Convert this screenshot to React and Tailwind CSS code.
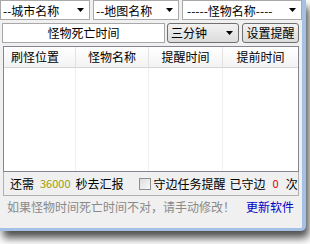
import React from 'react';

const Arrow = () => (
  <svg width="8" height="5" viewBox="0 0 8 5" className="shrink-0">
    <path d="M0 0 H7 L3.5 4 Z" fill="#000" />
  </svg>
);

const Combo = ({ text, className }) => (
  <div className={`h-[20px] bg-white border border-[#a8a8a8] flex items-center pl-[2px] pr-[4px] ${className}`}>
    <span className="flex-1 whitespace-nowrap overflow-hidden leading-[17px]">{text}</span>
    <Arrow />
  </div>
);

const columns = [
  { label: '刷怪位置', w: 'w-[72px]', align: 'justify-start pl-[7px]' },
  { label: '怪物名称', w: 'w-[73px]', align: 'justify-center' },
  { label: '提醒时间', w: 'w-[74px]', align: 'justify-center' },
  { label: '提前时间', w: 'flex-1', align: 'justify-center' },
];

export default function App() {
  return (
    <div
      className="relative w-[310px] h-[244px] overflow-hidden bg-white text-[12px] text-black"
      style={{ fontFamily: '"Noto Sans CJK SC", "Liberation Sans", sans-serif' }}
    >
      <div className="w-[306px] h-[231px] bg-[#f0f0f0] border-r-[4px] border-b-[3px] border-[#a4c0e4] rounded-br-[5px] shadow-[3px_7px_9px_rgba(0,0,0,0.7)] flex flex-col">
        {/* top combos */}
        <div className="flex h-[20px]">
          <Combo text="--城市名称" className="w-[90px]" />
          <Combo text="--地图名称" className="w-[86px] ml-[3px]" />
          <Combo text="-----怪物名称----" className="w-[120px] ml-[3px] pl-[4px]" />
        </div>

        {/* time row */}
        <div className="flex mt-[3px] h-[20px]">
          <div className="ml-[2px] w-[163px] bg-white border border-[#a8a8a8] flex items-center justify-center leading-none">
            怪物死亡时间
          </div>
          <div className="ml-[2px] w-[72px] rounded-[3px] border border-[#707070] bg-gradient-to-b from-[#f2f2f2] to-[#dcdcdc] flex items-center pl-[3px] pr-[4px]">
            <span className="flex-1 leading-none">三分钟</span>
            <Arrow />
          </div>
          <div className="ml-[3px] w-[57px] rounded-[3px] border border-[#707070] bg-gradient-to-b from-[#f2f2f2] to-[#dcdcdc] flex items-center justify-center leading-none">
            设置提醒
          </div>
        </div>

        {/* list view */}
        <div className="mt-[3px] ml-[3px] w-[296px] h-[126px] bg-white border border-[#828790] flex flex-col">
          <div className="flex h-[21px] bg-gradient-to-b from-white to-[#f3f3f3] border-b border-[#d5d5d5]">
            {columns.map((c, i) => (
              <div
                key={c.label}
                className={`${c.w} flex items-center ${c.align} leading-none ${i < 3 ? 'border-r border-[#e3e3e3]' : ''}`}
              >
                {c.label}
              </div>
            ))}
          </div>
          <div className="flex flex-1">
            <div className="w-[72px] border-r border-[#f0f0f0]" />
            <div className="w-[73px] border-r border-[#f0f0f0]" />
            <div className="w-[74px] border-r border-[#f0f0f0]" />
            <div className="flex-1" />
          </div>
        </div>

        {/* status row */}
        <div className="ml-[3px] w-[296px] h-[24px] border-x border-b border-[#b0b0b0] flex items-center pl-[6px] whitespace-nowrap leading-none">
          <span>还需</span>
          <span className="ml-[6px] text-[11px] text-[#a09c00]">36000</span>
          <span className="ml-[5px]">秒去汇报</span>
          <span className="ml-[15px] w-[12px] h-[12px] border border-[#8e8f8f] bg-gradient-to-br from-[#dcdcdc] to-[#fafafa] inline-block" />
          <span className="ml-[3px]">守边任务提醒</span>
          <span className="ml-[4px]">已守边</span>
          <span className="ml-[7px] text-[11px] text-[#e00000]">0</span>
          <span className="ml-[7px]">次</span>
        </div>

        {/* hint row */}
        <div className="flex items-center h-[22px] pl-[7px] whitespace-nowrap leading-none">
          <span className="text-[#8a8a8a]">如果怪物时间死亡时间不对，请手动修改！</span>
          <span className="ml-[11px] text-[#0000c8]">更新软件</span>
        </div>
      </div>
    </div>
  );
}
